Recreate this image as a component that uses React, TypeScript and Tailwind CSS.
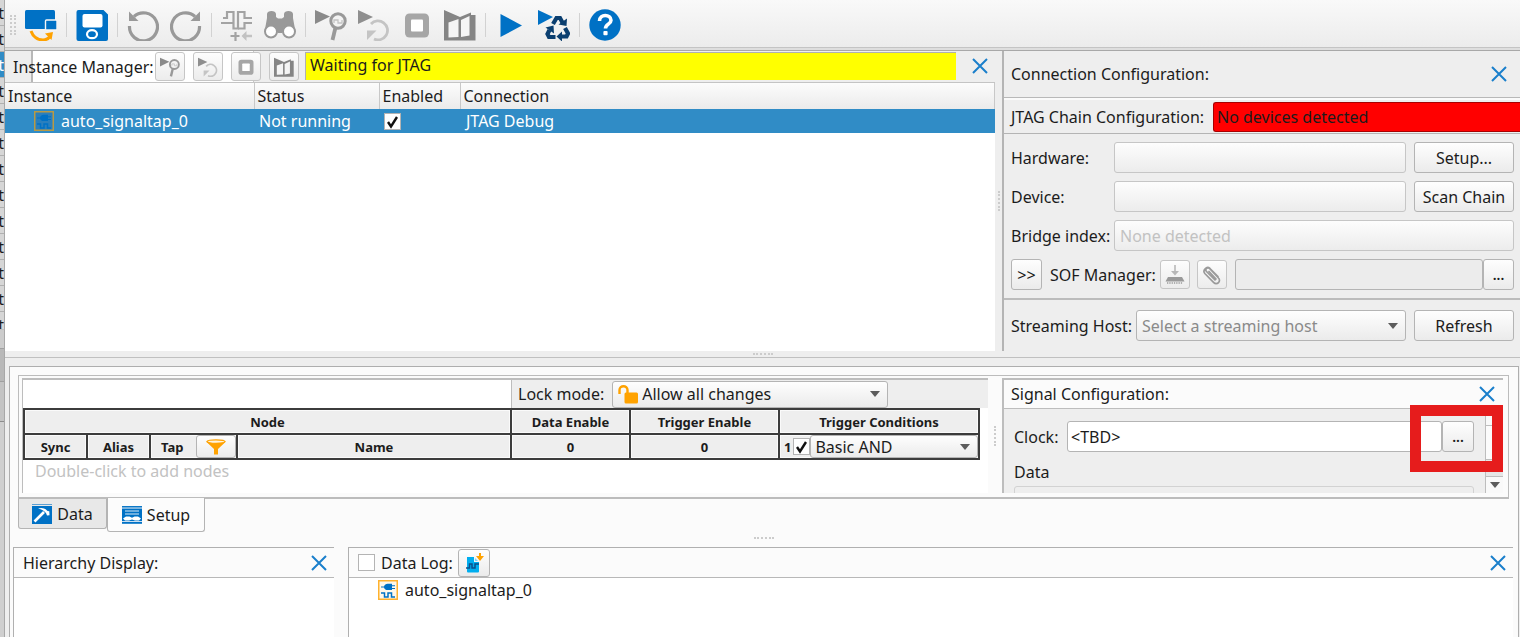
import React from "react";

type IconProps = { className?: string };

const ICON = "block size-8 shrink-0";
const RAISED = "rounded-[3px] border border-[#b4b4b4] bg-linear-to-b from-[#fefefe] to-[#ebebeb]";
const FLAT = "rounded-[3px] border border-[#c6c6c6] bg-linear-to-b from-[#fdfdfd] to-[#ececec]";

const DeviceIcon = () => (
  <svg viewBox="0 0 32 32" className={ICON} aria-hidden="true">
    <rect x="0" y="1" width="30" height="19" rx="1.5" fill="#0071c5" />
    <rect x="20.5" y="11" width="11.5" height="10" rx="1" fill="#0071c5" stroke="#f6f6f6" strokeWidth="1.4" />
    <path d="M6 22c2 6 7 9 12 9 3.500 0 6-2 7.500-4" fill="none" stroke="#ffa200" strokeWidth="3" />
    <path d="M20 24.500l8-1.500-1.500 8z" fill="#ffa200" />
  </svg>
);
const SaveIcon = () => (
  <svg viewBox="0 0 32 32" className={ICON} aria-hidden="true">
    <path d="M2.500 1h25L32 5.500V30a2 2 0 0 1-2 2H2.500A2 2 0 0 1 .5 30V3a2 2 0 0 1 2-2z" fill="#0071c5" />
    <rect x="6.500" y="5" width="20" height="13.500" rx="2" fill="#fff" />
    <ellipse cx="16" cy="25.200" rx="5" ry="4" fill="none" stroke="#fff" strokeWidth="2.200" />
  </svg>
);
const UndoIcon = ({ className }: IconProps) => (
  <svg viewBox="0 0 32 32" className={`${ICON} ${className ?? ""}`} aria-hidden="true">
    <path d="M2.500 17A14 14 0 1 0 7 7.500" fill="none" stroke="#999" strokeWidth="3.200" />
    <path d="M2 2.500V12h9.500L8 8.500z" fill="#999" />
  </svg>
);
const WaveformIcon = () => (
  <svg viewBox="0 0 32 32" className={ICON} aria-hidden="true">
    <g fill="none" stroke="#a3a3a3" strokeWidth="2.200">
      <path d="M2 9h4V3h6.500v16.500H17V3h6.500v6H31" />
      <path d="M0 14h12.500M17 19.500h6.500V14H31" />
    </g>
    <path d="M9.500 27h9M14.500 23v9" fill="none" stroke="#a3a3a3" strokeWidth="2.200" />
    <path d="M20.500 27l5-5v3.800H31v2.400h-5.500V32z" fill="#c2c2c2" />
  </svg>
);
const BinocularsIcon = () => (
  <svg viewBox="0 0 32 32" className={ICON} aria-hidden="true">
    <path d="M3 5c0-4 9-4 9 0v3l2 1.500h4L20 8V5c0-4 9-4 9 0v4l2.500 14H.5L3 9z" fill="#999" />
    <path d="M13.500 17h5v7h-5z" fill="#999" />
    <circle cx="7" cy="22.500" r="6" fill="#fff" stroke="#999" strokeWidth="2" />
    <circle cx="25" cy="22.500" r="6" fill="#fff" stroke="#999" strokeWidth="2" />
  </svg>
);
const PlaySearchIcon = ({ className = ICON }: IconProps) => (
  <svg viewBox="0 0 32 32" className={className} aria-hidden="true">
    <path d="M0 1l15 6.500L0 15z" fill="#8a8a8a" />
    <circle cx="23" cy="12" r="7.200" fill="#f3f3f3" stroke="#999" strokeWidth="3" />
    <path d="M19 14v-3h4v3h4v-3" fill="none" stroke="#c4c4c4" strokeWidth="1.300" />
    <path d="M20.500 18.500L17.500 31" stroke="#999" strokeWidth="3.800" />
  </svg>
);
const PlayRepeatIcon = ({ className = ICON }: IconProps) => (
  <svg viewBox="0 0 32 32" className={className} aria-hidden="true">
    <path d="M0 1l15 7L0 15z" fill="#8f8f8f" />
    <path d="M13 15a9.500 9.500 0 1 1 3 15" fill="none" stroke="#c4c4c4" strokeWidth="2.800" />
    <path d="M9 31v-9.500h9.500z" fill="#c4c4c4" />
  </svg>
);
const StopIcon = ({ className = ICON }: IconProps) => (
  <svg viewBox="0 0 32 32" className={className} aria-hidden="true">
    <rect x="4" y="4.500" width="24" height="24" rx="4.500" fill="#a6a6a6" />
    <rect x="10" y="10.500" width="12" height="12" rx="1" fill="#fff" />
  </svg>
);
const BookIcon = ({ className = ICON }: IconProps) => (
  <svg viewBox="0 0 32 32" className={className} aria-hidden="true">
    <path d="M0 1l16 7 11-4.500V6h4.500v25.500H0z" fill="#858585" />
    <path d="M4.500 13.500L14.500 10v18l-10 .5z" fill="#f5f5f5" />
    <path d="M25.500 7l-8.500 4v17l8.500-1.500z" fill="#f5f5f5" />
  </svg>
);
const PlayIcon = () => (
  <svg viewBox="0 0 32 32" className={ICON} aria-hidden="true">
    <path d="M5.500 5L27 16.500 5.500 28z" fill="#0071c5" />
  </svg>
);
const RecycleIcon = () => (
  <svg viewBox="0 0 32 32" className={ICON} aria-hidden="true">
    <path d="M0 1l15 7L0 16z" fill="#0071c5" />
    <g fill="none" stroke="#0b3f70" strokeWidth="4.200">
      <path d="M15 15l3.500-6h3.500l3 5.500" />
      <path d="M27 19l3 5.500-1.500 3H23" />
      <path d="M17.500 28h-6.500l-1.500-3 2-4" />
    </g>
    <path d="M20.500 15.500l8 1.500.5-7.500zM24 22.500v10l-5.500-5zM7.500 18.500l8-2 .5 8z" fill="#0b3f70" />
  </svg>
);
const HelpIcon = () => (
  <svg viewBox="0 0 32 32" className={ICON} aria-hidden="true">
    <circle cx="16" cy="16" r="15.700" fill="#0071c5" />
    <path d="M10.500 12c0-7.500 11.500-7 11.500-.8 0 4-5.500 4-5.500 8.300" fill="none" stroke="#fff" strokeWidth="3.600" />
    <rect x="14.400" y="22" width="4.200" height="4.200" rx="1" fill="#fff" />
  </svg>
);
const SignalTapIcon = ({ className }: IconProps) => (
  <svg viewBox="0 0 20 20" className={`block size-5 shrink-0 ${className ?? ""}`} aria-hidden="true">
    <rect x=".75" y=".75" width="18.500" height="18.500" fill="var(--tap-bg)" stroke="var(--tap-edge)" strokeWidth="1.500" />
    <path d="M3 6.500h3c.5-2 2-2.800 3.500-2.800H14v1.500h3v1h-3V8h3v1h-3v1H9.500C8 10 6.500 9.500 6 7.500H3z" fill="#0071c5" />
    <path d="M3 13h3.500v4H10v-4h3.500v4H17" fill="none" stroke="#0071c5" strokeWidth="1.500" />
  </svg>
);
const HammerIcon = () => (
  <svg viewBox="0 0 20 20" className="block size-5 shrink-0" aria-hidden="true">
    <path d="M0 .5h20" stroke="#5b9fd3" />
    <rect y="2" width="20" height="18" fill="#0071c5" />
    <path d="M2.500 17.500L12 8" stroke="#fff" strokeWidth="2.600" />
    <path d="M6 4.500c4-1.500 7.500 0 9.500 2.500l1.800.3.200 4-2.500.2-1-2.500C12 6.500 10 5.500 6 4.500z" fill="#fff" />
  </svg>
);
const SetupIcon = () => (
  <svg viewBox="0 0 20 20" className="block size-5 shrink-0" aria-hidden="true">
    <path d="M0 1.800h20" stroke="#0071c5" strokeWidth="1.500" />
    <path d="M0 3.500h20v12.500H0z" fill="#0071c5" />
    <path d="M3 6h14M3 9h14" stroke="#d9ebf8" strokeWidth="1.200" />
    <path d="M1 13.500l3-2h3.500l2.500 1.200 2.500-1.200H16l3 2-2 2h-4L10 14.500l-3 1H3z" fill="#fff" />
    <path d="M0 17.800h20" stroke="#0071c5" strokeWidth="2" />
  </svg>
);
const FunnelIcon = () => (
  <svg viewBox="0 0 20 16" className="h-4 w-5" aria-hidden="true">
    <path d="M0 2.500L8 10v5.500h4V10l8-7.500z" fill="#ffa200" />
    <ellipse cx="10" cy="2.600" rx="9" ry="1.800" fill="#fff5e0" stroke="#ffa200" strokeWidth="1.300" />
  </svg>
);
const LockIcon = () => (
  <svg viewBox="0 0 20 19" className="pointer-events-none absolute top-1 left-1.5 h-[19px] w-5" aria-hidden="true">
    <path d="M1.500 9V5c0-5 8-5 8 0v4" fill="none" stroke="#ffa200" strokeWidth="2.400" />
    <rect x="6.500" y="7.500" width="13.500" height="11" rx="1.500" fill="#ffa200" />
  </svg>
);
const LogFileIcon = () => (
  <svg viewBox="0 0 20 20" className="size-5" aria-hidden="true">
    <path d="M3 4h7v5h5v9.500a1 1 0 0 1-1 1H4a1 1 0 0 1-1-1z" fill="#00aeef" />
    <path d="M11 5l3 3h-3z" fill="#7fd3f5" />
    <path d="M2 15h3.500v-4H8v4h3v-4h4" fill="none" stroke="#0b4f8a" strokeWidth="1.500" />
    <path d="M12 3h3V0h2v3h3l-4 5z" fill="#ffa200" />
  </svg>
);
const ChipDownloadIcon = () => (
  <svg viewBox="0 0 20 20" className="size-5" aria-hidden="true">
    <path d="M10 0v7" stroke="#b8b8b8" strokeWidth="1.600" />
    <path d="M6 6h8l-4 4.500z" fill="#b8b8b8" />
    <path d="M3 12h14l2.500 4.500H.5z" fill="#9a9a9a" />
    <path d="M2 18h16" stroke="#9a9a9a" strokeWidth="1.400" strokeDasharray="1.300 1" />
  </svg>
);
const ClipIcon = () => (
  <svg viewBox="0 0 20 20" className="size-5" aria-hidden="true">
    <path
      d="M13 15L4.500 6.500a2 2 0 0 1 3-3l9 9.500a3.300 3.300 0 0 1-4.700 4.700L2.800 8.500C.3 5.500 4.500.5 8 3.500l8 8M7 6.500l7 7.500"
      fill="none"
      stroke="#9a9a9a"
      strokeWidth="1.700"
      strokeLinecap="round"
    />
  </svg>
);
const CloseButton = ({ label }: { label: string }) => (
  <button type="button" aria-label={label} className="shrink-0">
    <svg viewBox="0 0 16 16" className="block size-4" aria-hidden="true">
      <path d="M1 1l14 14M15 1L1 15" stroke="#1a7fcb" strokeWidth="2" />
    </svg>
  </button>
);
const Caret = () => (
  <svg viewBox="0 0 10 6" className="pointer-events-none absolute top-1/2 right-2 h-1.5 w-2.5 -translate-y-1/2" aria-hidden="true">
    <path d="M0 0h10L5 6z" fill="#5c5c5c" />
  </svg>
);

function ToolButton({ label, children }: { label: string; children: React.ReactNode }) {
  return (
    <button type="button" aria-label={label} title={label}>
      {children}
    </button>
  );
}
const ToolGroup = ({ children }: { children: React.ReactNode }) => <div className="flex gap-[11px]">{children}</div>;
const Divider = () => <span className="mx-[9px] h-6 w-px bg-[#d2d2d2]" />;

const SMALL_ICON = "block size-5";
function SmallButton({ label, children }: { label: string; children: React.ReactNode }) {
  return (
    <button type="button" aria-label={label} title={label} className={`${FLAT} flex h-[29px] w-[30px] shrink-0 items-center justify-center`}>
      {children}
    </button>
  );
}
const DotsX = () => <span className="block h-0.5 w-5 border-t-2 border-dotted border-[#cccccc]" />;
const DotsY = () => <span className="block h-5 w-0.5 border-l-2 border-dotted border-[#cccccc]" />;

function Toolbar() {
  return (
    <header className="flex h-12 shrink-0 items-center border-b border-[#c4c4c4] bg-linear-to-b from-[#f9f9f9] to-[#ececec] pt-[3px] pl-[5px]">
      <span className="flex gap-0.5 pr-[9px]">
        <DotsY />
        <DotsY />
      </span>
      <ToolButton label="Program device"><DeviceIcon /></ToolButton>
      <Divider />
      <ToolButton label="Save"><SaveIcon /></ToolButton>
      <Divider />
      <ToolGroup>
        <ToolButton label="Undo"><UndoIcon /></ToolButton>
        <ToolButton label="Redo"><UndoIcon className="-scale-x-100" /></ToolButton>
      </ToolGroup>
      <Divider />
      <ToolGroup>
        <ToolButton label="Insert node"><WaveformIcon /></ToolButton>
        <ToolButton label="Find"><BinocularsIcon /></ToolButton>
      </ToolGroup>
      <Divider />
      <ToolGroup>
        <ToolButton label="Run analysis"><PlaySearchIcon /></ToolButton>
        <ToolButton label="Autorun analysis"><PlayRepeatIcon /></ToolButton>
        <ToolButton label="Stop analysis"><StopIcon /></ToolButton>
        <ToolButton label="Read data"><BookIcon /></ToolButton>
      </ToolGroup>
      <Divider />
      <ToolGroup>
        <ToolButton label="Start compilation"><PlayIcon /></ToolButton>
        <ToolButton label="Recompile"><RecycleIcon /></ToolButton>
      </ToolGroup>
      <Divider />
      <ToolButton label="Help"><HelpIcon /></ToolButton>
    </header>
  );
}

function InstanceManager() {
  const head = "border-r border-[#c8c8c8] px-[3px] text-left font-normal";
  return (
    <section className="flex min-w-0 flex-1 flex-col bg-white">
      <div className="flex h-8 items-center border-b border-[#c4c4c4] bg-[#eeeeee]">
        <div className="flex h-full w-[300px] shrink-0">
          <div className="w-7 shrink-0 border-r-2 border-[#b8b8b8]" />
          <div className="-ml-7 flex w-[249px] shrink-0 items-center border-r border-[#c8c8c8] bg-linear-to-r from-transparent from-[28px] to-white to-[28px]">
            <h2 className="w-[150px] shrink-0 pl-2 whitespace-nowrap">Instance Manager:</h2>
            <div className="flex gap-2">
              <SmallButton label="Run analysis"><PlaySearchIcon className={SMALL_ICON} /></SmallButton>
              <SmallButton label="Autorun analysis"><PlayRepeatIcon className={SMALL_ICON} /></SmallButton>
              <SmallButton label="Stop analysis"><StopIcon className={SMALL_ICON} /></SmallButton>
              <SmallButton label="Read data"><BookIcon className={SMALL_ICON} /></SmallButton>
            </div>
          </div>
        </div>
        <output className="mb-0.5 flex h-7 flex-1 items-start border-t border-l border-[#b0b0b0] bg-[#ffff00] pl-1 leading-6">Waiting for JTAG</output>
        <div className="flex w-[39px] justify-center pb-0.5 pl-2">
          <CloseButton label="Close instance manager" />
        </div>
      </div>
      <table className="w-full table-fixed border-collapse">
        <thead className="h-[26px] bg-linear-to-b from-[#fcfcfc] to-[#ebebeb]">
          <tr>
            <th className={`${head} w-[249px]`}>Instance</th>
            <th className={`${head} w-[125px]`}>Status</th>
            <th className={`${head} w-[81px]`}>Enabled</th>
            <th className={head}>Connection</th>
          </tr>
        </thead>
        <tbody className="bg-[#308cc6] text-white">
          <tr className="h-6">
            <td className="p-0">
              <span className="flex items-center gap-[7px] pl-[29px]">
                <SignalTapIcon className="[--tap-bg:#2a7fbd] [--tap-edge:#b89a45]" />
                auto_signaltap_0
              </span>
            </td>
            <td className="p-0 pl-[5px]">Not running</td>
            <td className="p-0 pl-[5px]">
              <CheckBox label="Instance enabled" checked />
            </td>
            <td className="p-0 pl-1.5">JTAG Debug</td>
          </tr>
        </tbody>
      </table>
    </section>
  );
}

function CheckBox({ label, checked = false, id }: { label: string; checked?: boolean; id?: string }) {
  return (
    <span className="relative block size-[17px] shrink-0">
      <input
        id={id}
        type="checkbox"
        aria-label={label}
        defaultChecked={checked}
        className="peer block size-[17px] appearance-none border border-[#b4b4b4] bg-white"
      />
      <svg viewBox="0 0 17 17" className="pointer-events-none absolute inset-0 hidden peer-checked:block" aria-hidden="true">
        <path d="M4 9l3 4.500L13 4" fill="none" stroke="#111" strokeWidth="2.400" />
      </svg>
    </span>
  );
}

function ConnectionPanel() {
  const label = "w-[103px] shrink-0 whitespace-nowrap";
  return (
    <section className="w-[518px] shrink-0 border-l-2 border-[#b4b4b4] bg-[#eeeeee]">
      <div className="flex h-[47px] items-center justify-between border-b border-[#b8b8b8] pr-[13px] pl-[7px]">
        <h2>Connection Configuration:</h2>
        <CloseButton label="Close connection configuration" />
      </div>
      <div className="flex h-9 items-center gap-2 border-t-2 border-b border-t-[#fafafa] border-b-[#b4b4b4] pl-[7px]">
        <span className="w-[194px] shrink-0 whitespace-nowrap">JTAG Chain Configuration:</span>
        <output className="flex h-[30px] flex-1 items-center rounded-l-[3px] border border-r-0 border-[#a80000] bg-[#ff0000] pl-[3px]">No devices detected</output>
      </div>
      <div className="flex flex-col gap-2 border-b-2 border-[#bcbcbc] py-2 pr-1.5 pl-[7px]">
        <div className="flex items-center">
          <label htmlFor="hardware" className={label}>Hardware:</label>
          <input id="hardware" disabled className={`${FLAT} mr-2 h-[31px] min-w-0 flex-1`} />
          <button type="button" className={`${RAISED} h-[31px] w-[100px]`}>Setup...</button>
        </div>
        <div className="flex items-center">
          <label htmlFor="device" className={label}>Device:</label>
          <input id="device" disabled className={`${FLAT} mr-2 h-[31px] min-w-0 flex-1`} />
          <button type="button" className={`${RAISED} h-[31px] w-[100px] whitespace-nowrap`}>Scan Chain</button>
        </div>
        <div className="flex items-center">
          <label htmlFor="bridge" className={label}>Bridge index:</label>
          <input id="bridge" disabled placeholder="None detected" className={`${FLAT} h-[31px] min-w-0 flex-1 px-[5px] placeholder:text-[#c2c2c2]`} />
        </div>
        <div className="flex items-center">
          <button type="button" className={`${RAISED} mr-2 h-[31px] w-[31px] text-base`}>&gt;&gt;</button>
          <label htmlFor="sof" className="w-[110px] shrink-0 whitespace-nowrap">SOF Manager:</label>
          <div className="flex gap-[7px] pr-2">
            <SmallButton label="Program device"><ChipDownloadIcon /></SmallButton>
            <SmallButton label="Attach file"><ClipIcon /></SmallButton>
          </div>
          <input id="sof" disabled className="h-[31px] min-w-0 flex-1 rounded-[3px] border border-[#b4b4b4] bg-[#ececec]" />
          <button type="button" aria-label="Browse" className={`${RAISED} h-[31px] w-[31px] text-sm font-semibold`}>...</button>
        </div>
      </div>
      <div className="flex items-center gap-2 py-2.5 pr-1.5 pl-[7px]">
        <label htmlFor="host" className="w-[117px] shrink-0 whitespace-nowrap">Streaming Host:</label>
        <span className="relative min-w-0 flex-1">
          <select id="host" className={`${RAISED} block h-[31px] w-full appearance-none px-[5px] text-[#8a8a8a]`}>
            <option>Select a streaming host</option>
          </select>
          <Caret />
        </span>
        <button type="button" className={`${RAISED} h-[31px] w-[100px]`}>Refresh</button>
      </div>
    </section>
  );
}

function NodeTable() {
  const cell = "border-2 border-[#3c3c3c] bg-[#eeeeee] p-0 text-center font-bold shadow-[inset_0_0_0_1px_#fafafa]";
  return (
    <section className="min-w-0 flex-1 border-t-2 border-l border-[#bdbdbd] bg-white">
      <div className="flex h-7">
        <div className="w-[488px] shrink-0" />
        <div className="flex flex-1 items-center gap-2 border-l border-[#bdbdbd] bg-[#eeeeee] pl-1.5">
          <label htmlFor="lock" className="whitespace-nowrap">Lock mode:</label>
          <span className="relative w-[276px]">
            <select id="lock" className={`${RAISED} block h-[27px] w-full appearance-none pl-[29px]`}>
              <option>Allow all changes</option>
            </select>
            <LockIcon />
            <Caret />
          </span>
        </div>
      </div>
      <div className="pr-2">
        <table className="w-full table-fixed border-collapse text-[13px] leading-5">
          <colgroup>
            <col className="w-[63px]" />
            <col className="w-[63px]" />
            <col className="w-[87px]" />
            <col />
            <col className="w-[119px]" />
            <col className="w-[149px]" />
            <col className="w-[200px]" />
          </colgroup>
          <thead>
            <tr className="h-[25px]">
              <th colSpan={4} className={cell}>Node</th>
              <th className={cell}>Data Enable</th>
              <th className={cell}>Trigger Enable</th>
              <th className={cell}>Trigger Conditions</th>
            </tr>
          </thead>
          <tbody>
            <tr className="h-[25px]">
              <th className={cell}>Sync</th>
              <th className={cell}>Alias</th>
              <th className={cell}>
                <span className="flex h-[23px] items-center justify-between pl-2.5">
                  Tap
                  <button type="button" aria-label="Filter taps" className={`${RAISED} flex h-[23px] w-10 items-center justify-center`}>
                    <FunnelIcon />
                  </button>
                </span>
              </th>
              <th className={cell}>Name</th>
              <td className={cell}>0</td>
              <td className={cell}>0</td>
              <td className={cell}>
                <span className="flex h-[23px] items-center pl-1">
                  1
                  <span className="ml-0.5"><CheckBox label="Trigger condition enabled" checked /></span>
                  <span className="relative flex-1">
                    <select aria-label="Trigger condition type" className={`${RAISED} block h-[23px] w-full appearance-none pl-1 text-base leading-5 font-normal`}>
                      <option>Basic AND</option>
                    </select>
                    <Caret />
                  </span>
                </span>
              </td>
            </tr>
          </tbody>
        </table>
      </div>
      <p className="h-8 pl-3 leading-[22px] text-[#c2c2c2]">Double-click to add nodes</p>
    </section>
  );
}

function SignalPanel() {
  return (
    <section className="relative flex w-[501px] shrink-0 flex-col border-t-2 border-l-2 border-[#bdbdbd] bg-[#eeeeee]">
      <div className="flex h-[29px] items-center justify-between border-b border-[#bdbdbd] bg-[#fbfbfb] pr-2 pl-[7px]">
        <h2>Signal Configuration:</h2>
        <CloseButton label="Close signal configuration" />
      </div>
      <div className="flex h-[84px]">
        <div className="flex-1 overflow-hidden pt-3 pr-[11px] pl-2.5">
          <div className="flex items-center">
            <label htmlFor="clock" className="w-[53px] shrink-0">Clock:</label>
            <input id="clock" defaultValue="<TBD>" className="h-[31px] min-w-0 flex-1 rounded-[3px] border border-[#b4b4b4] bg-white px-[3px]" />
            <button type="button" aria-label="Browse clock" className={`${RAISED} h-[31px] w-8 text-sm font-semibold`}>...</button>
          </div>
          <fieldset className="pt-2">
            <legend className="float-left leading-6">Data</legend>
            <div className="clear-both h-5 pt-0.5">
              <div className="h-5 rounded-t-[3px] border border-[#d2d2d2]" />
            </div>
          </fieldset>
        </div>
        <div className="flex w-[18px] flex-col border-l border-[#bdbdbd] bg-[#e6e6e6]">
          <div className="h-4 bg-[#f9f9f9]" />
          <div className="h-[35px] border-y border-[#bdbdbd] bg-[#fbfbfb]" />
          <div className="flex-1" />
          <button type="button" aria-label="Scroll down" className="flex h-[17px] items-center justify-center border-t border-[#bdbdbd] bg-[#f9f9f9]">
            <svg viewBox="0 0 10 6" className="h-1.5 w-2.5" aria-hidden="true"><path d="M0 0h10L5 6z" fill="#5c5c5c" /></svg>
          </button>
        </div>
      </div>
      <div className="pointer-events-none absolute top-[25px] right-0 h-[67px] w-[93px] border-[11px] border-[#e61c1c]" />
    </section>
  );
}

function Tabs() {
  return (
    <div role="tablist" className="ml-2 flex h-[34px] items-start">
      <button type="button" role="tab" aria-selected={false} className="flex h-[30px] w-[89px] items-center justify-center gap-[5px] rounded-b-[3px] border border-t-0 border-[#b4b4b4] bg-[#e8e8e8]">
        <HammerIcon />
        Data
      </button>
      <button type="button" role="tab" aria-selected className="-mt-px flex h-[34px] w-[98px] items-center justify-center gap-[5px] rounded-b-[3px] border border-t-0 border-[#b4b4b4] bg-[#fcfcfc]">
        <SetupIcon />
        Setup
      </button>
    </div>
  );
}

function BottomPanels() {
  return (
    <div className="flex flex-1 gap-3.5 pr-[5px] pl-[3px]">
      <section className="flex w-[321px] shrink-0 flex-col border-t border-l border-[#b0b0b0] bg-white">
        <div className="flex h-[30px] items-center justify-between border-b border-[#b8b8b8] bg-[#fbfbfb] pr-[7px] pl-[9px]">
          <h2>Hierarchy Display:</h2>
          <CloseButton label="Close hierarchy display" />
        </div>
      </section>
      <section className="flex min-w-0 flex-1 flex-col border-t border-l border-[#b0b0b0] bg-white">
        <div className="flex h-[30px] items-center border-b border-[#b8b8b8] bg-[#fbfbfb] pr-[7px] pl-[9px]">
          <CheckBox id="datalog" label="Data Log" />
          <label htmlFor="datalog" className="w-[83px] shrink-0 pl-1.5 whitespace-nowrap">Data Log:</label>
          <button type="button" aria-label="Save to data log" className={`${RAISED} mr-auto flex h-7 w-8 items-center justify-center`}>
            <LogFileIcon />
          </button>
          <CloseButton label="Close data log" />
        </div>
        <ul>
          <li className="flex h-6 items-center gap-[7px] pl-[29px]">
            <SignalTapIcon className="[--tap-bg:#fff8ea] [--tap-edge:#ffb22e]" />
            auto_signaltap_0
          </li>
        </ul>
      </section>
    </div>
  );
}

const ROWS = Array.from({ length: 13 }, (_, i) => i);

export default function App() {
  return (
    <div className="flex min-h-screen bg-[#eeeeee] font-['Noto_Sans',sans-serif] text-base leading-6 text-[#1c1c1c]">
      <aside className="flex w-1 shrink-0 flex-col overflow-hidden bg-[#cfcfcf]">
        <div className="h-[330px] overflow-hidden border-b border-[#c0c0c0]">
          {ROWS.map((row) => (
            <div key={row} className={`flex h-[26px] items-end justify-end border-b border-[#b0b0b0] ${row === 2 ? "bg-[#308cc6] text-white" : "bg-[#d6d6d6]"}`}>
              t
            </div>
          ))}
        </div>
        <div className="h-[18px] bg-[#cccccc]" />
        <div className="h-[34px] border-y border-[#a0a0a0] bg-[#b8b8b8]" />
        <div className="h-10 border-b border-[#8c8c8c] bg-[#c4c4c4]" />
      </aside>
      <div className="flex min-w-0 flex-1 flex-col border-l border-[#a8a8a8]">
        <Toolbar />
        <div className="h-[3px] shrink-0 border-b border-[#a8a8a8] bg-[#dedede]" />
        <div className="flex">
          <InstanceManager />
          <div className="flex w-[7px] items-center justify-center"><DotsY /></div>
          <ConnectionPanel />
        </div>
        <div className="flex h-[7px] items-start justify-center border-b border-[#c0c0c0] pt-0.5"><DotsX /></div>
        <main className="mt-2 mr-px ml-1 flex flex-1 flex-col border border-b-0 border-[#aeaeae] bg-[#fbfbfb]">
          <div className="mt-2 mr-[9px] ml-2 flex border border-b-2 border-[#bcbcbc] pt-0.5 pr-[5px] pb-1 pl-[3px]">
            <NodeTable />
            <div className="flex w-3.5 items-center justify-center"><DotsY /></div>
            <SignalPanel />
          </div>
          <Tabs />
          <div className="flex h-3.5 items-center justify-center pb-1"><DotsX /></div>
          <BottomPanels />
        </main>
      </div>
    </div>
  );
}
